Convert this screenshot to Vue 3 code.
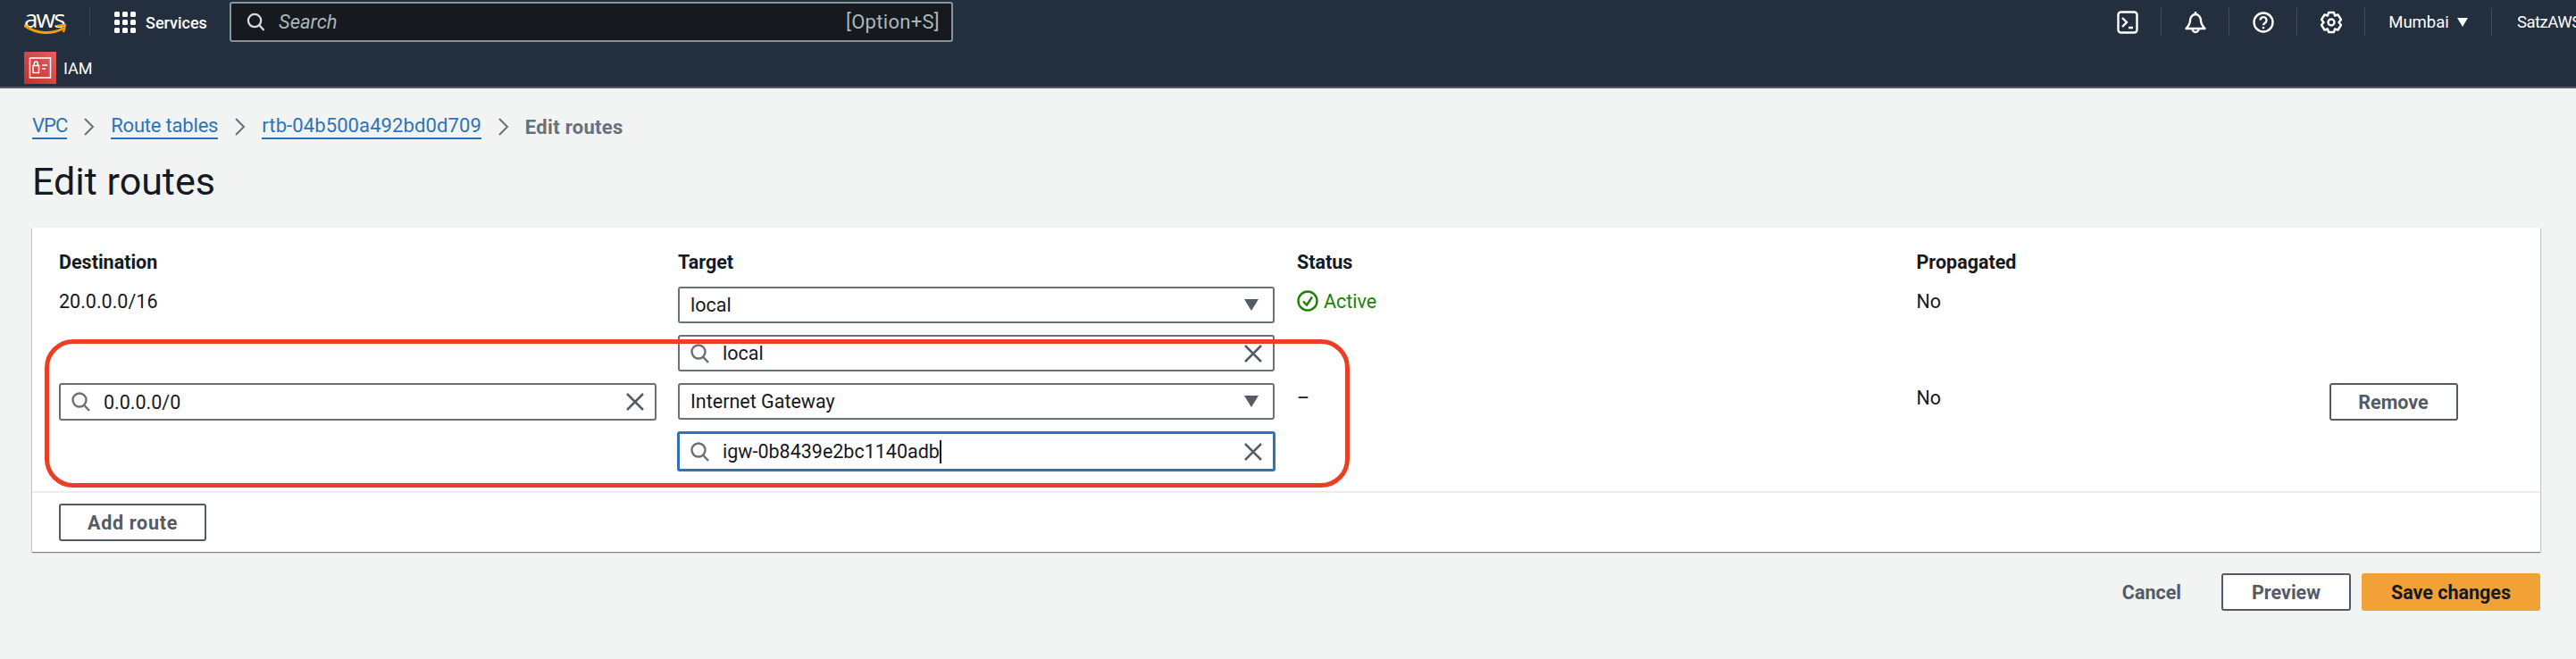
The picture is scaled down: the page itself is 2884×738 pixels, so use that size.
<script setup>
const crumbs = [
  { label: "VPC", cls: "w1" },
  { label: "Route tables", cls: "w2" },
  { label: "rtb-04b500a492bd0d709", cls: "w3" },
];
const columns = ["Destination", "Target", "Status", "Propagated", ""];
const dots = [0, 9, 18];
</script>

<template>
  <div class="page">
    <header class="topbar">
      <div class="nav-main">
        <div class="logo">
          <span class="logo-text">aws</span>
          <svg class="smile" width="48" height="12" viewBox="0 0 48 12">
            <path d="M1 2c13 9 30 10 42 3" fill="none" stroke="#f90" stroke-width="3" stroke-linecap="round" />
            <path d="M37 2l9-1-2 8" fill="none" stroke="#f90" stroke-width="2.5" stroke-linejoin="round" />
          </svg>
        </div>
        <span class="logo-divider"></span>
        <div class="services">
          <svg width="24" height="24" viewBox="0 0 24 24">
            <template v-for="y in dots" :key="y">
              <rect v-for="x in dots" :key="x" :x="x" :y="y" width="6" height="6" rx="1.5" fill="#fff" />
            </template>
          </svg>
          <span>Services</span>
        </div>
        <div class="global-search">
          <svg width="21" height="21" viewBox="0 0 22 22" fill="none" stroke="#d5dbdb" stroke-width="2.4">
            <circle cx="9.5" cy="9.5" r="7.5" />
            <path d="M15 15l5.500 6" />
          </svg>
          <span class="search-hint">Search</span>
          <span class="search-key">[Option+S]</span>
        </div>
        <div class="nav-right">
          <div class="nav-cell">
            <svg width="24" height="26" viewBox="0 0 24 26" fill="none" stroke="#fff" stroke-width="2.4">
              <rect x="1.500" y="1.500" width="21" height="23" rx="3" />
              <path d="M6 8l5 5-5 5M13 19h5" />
            </svg>
          </div>
          <div class="nav-cell">
            <svg width="24" height="26" viewBox="0 0 24 26" fill="none" stroke="#fff" stroke-width="2.400" stroke-linejoin="round">
              <path d="M12 1v3M6 11c0-4 3-7 6-7s6 3 6 7c0 4 2 6 4.500 9h-21C4 17 6 15 6 11z" />
              <path d="M8.500 20.500a3.500 3.500 0 0 0 7 0" />
            </svg>
          </div>
          <div class="nav-cell">
            <svg width="24" height="24" viewBox="0 0 24 24" fill="none" stroke="#fff" stroke-width="2.400">
              <circle cx="12" cy="12" r="10.500" />
              <path d="M8.500 9.500a3.500 3.500 0 1 1 5.500 3c-1.300.8-2 1.300-2 2.800" />
              <path d="M12 17v2.200" />
            </svg>
          </div>
          <div class="nav-cell">
            <svg width="24" height="26" viewBox="0 0 24 26" fill="none" stroke="#fff" stroke-width="2.400" stroke-linejoin="round">
              <path d="M9 2h6l1 3.500 3.500-1L23 10l-2.500 3 2.500 3-3.500 5.500-3.500-1L15 24H9l-1-3.500-3.500 1L1 16l2.500-3L1 10l3.500-5.500 3.500 1z" />
              <circle cx="12" cy="13" r="3.500" />
            </svg>
          </div>
          <div class="nav-cell region">
            <span>Mumbai</span>
            <i class="region-caret"></i>
          </div>
          <div class="nav-cell account">SatzAWS</div>
        </div>
      </div>
      <div class="nav-sub">
        <svg width="36" height="36" viewBox="0 0 36 36">
          <defs>
            <linearGradient id="iamRed" x1="0" y1="1" x2="1" y2="0">
              <stop offset="0" stop-color="#bd3230" />
              <stop offset="1" stop-color="#e4605c" />
            </linearGradient>
          </defs>
          <rect width="36" height="36" fill="url(#iamRed)" />
          <rect x="6.500" y="7" width="23" height="22" fill="none" stroke="#fff" stroke-width="1.500" />
          <rect x="10" y="15.500" width="6.500" height="8" fill="none" stroke="#fff" stroke-width="1.500" />
          <path d="M11.300 15.500v-2.500a2 2 0 0 1 4 0v2.500M20 15h6M20 19h4" fill="none" stroke="#fff" stroke-width="1.500" />
        </svg>
        <span>IAM</span>
      </div>
    </header>

    <main class="content">
      <nav class="breadcrumbs">
        <template v-for="crumb in crumbs" :key="crumb.label">
          <a :class="crumb.cls">{{ crumb.label }}</a>
          <svg class="chevron" width="13" height="20" viewBox="0 0 13 20" fill="none" stroke="#687078" stroke-width="2">
            <path d="M2 1l9 9-9 9" />
          </svg>
        </template>
        <span class="crumb-current">Edit routes</span>
      </nav>
      <h1>Edit routes</h1>

      <section class="card">
        <div class="routes">
          <div class="route-row head-row">
            <div v-for="col in columns" :key="col" class="col-head">{{ col }}</div>
          </div>

          <div class="route-row">
            <div class="cell-text dest-text">20.0.0.0/16</div>
            <div class="target-stack">
              <div class="field select">
                <span>local</span>
                <i class="caret"></i>
              </div>
              <div class="field search">
                <svg class="mag" width="22" height="22" viewBox="0 0 22 22" fill="none" stroke="#687078" stroke-width="2.400">
                  <circle cx="9" cy="9" r="7.500" />
                  <path d="M14 14.500l6 6.500" />
                </svg>
                <span>local</span>
                <svg class="clear" width="20" height="20" viewBox="0 0 20 20" fill="none" stroke="#545b64" stroke-width="2.500">
                  <path d="M1 1l18 18M19 1L1 19" />
                </svg>
              </div>
            </div>
            <div class="cell-text status-active">
              <svg width="24" height="24" viewBox="0 0 24 24" fill="none" stroke="#1d8102" stroke-width="2.400">
                <circle cx="12" cy="12" r="10.500" />
                <path d="M7 12.500l4 4 6-9" />
              </svg>
              <span>Active</span>
            </div>
            <div class="cell-text">No</div>
            <div></div>
          </div>

          <div class="route-row">
            <div class="field search dest-input">
              <svg class="mag" width="22" height="22" viewBox="0 0 22 22" fill="none" stroke="#687078" stroke-width="2.400">
                <circle cx="9" cy="9" r="7.500" />
                <path d="M14 14.500l6 6.500" />
              </svg>
              <span>0.0.0.0/0</span>
              <svg class="clear" width="20" height="20" viewBox="0 0 20 20" fill="none" stroke="#545b64" stroke-width="2.500">
                <path d="M1 1l18 18M19 1L1 19" />
              </svg>
            </div>
            <div class="target-stack">
              <div class="field select">
                <span>Internet Gateway</span>
                <i class="caret"></i>
              </div>
              <div class="field search focused">
                <svg class="mag" width="22" height="22" viewBox="0 0 22 22" fill="none" stroke="#687078" stroke-width="2.400">
                  <circle cx="9" cy="9" r="7.500" />
                  <path d="M14 14.500l6 6.500" />
                </svg>
                <span>igw-0b8439e2bc1140adb</span><i class="text-caret"></i>
                <svg class="clear" width="20" height="20" viewBox="0 0 20 20" fill="none" stroke="#545b64" stroke-width="2.500">
                  <path d="M1 1l18 18M19 1L1 19" />
                </svg>
              </div>
            </div>
            <div class="cell-text">–</div>
            <div class="cell-text">No</div>
            <button class="btn">Remove</button>
          </div>
        </div>

        <div class="card-footer">
          <button class="btn add-route">Add route</button>
        </div>

        <div class="annotation"></div>
      </section>

      <div class="actions">
        <span class="cancel">Cancel</span>
        <button class="btn preview">Preview</button>
        <button class="btn primary">Save changes</button>
      </div>
    </main>
  </div>
</template>

<style>
html,
body {
  margin: 0;
  background: #f2f3f3;
  overflow: hidden;
}
</style>

<style scoped>
.page {
  width: 2884px;
  height: 738px;
  background: #f2f3f3;
  font-family: Roboto, "Liberation Sans", sans-serif;
  font-size: 21.500px;
  color: #16191f;
  overflow: hidden;
}
.topbar {
  height: 97px;
  background: #232f3e;
  border-bottom: 2px solid #545b64;
  color: #fff;
}
.nav-main {
  display: flex;
  height: 52px;
  padding-left: 27px;
  align-items: center;
}
.logo {
  position: relative;
  width: 47px;
  height: 30px;
  margin-top: -4px;
}
.logo-text {
  display: block;
  font-family: "Open Sans", sans-serif;
  font-size: 28px;
  line-height: 22px;
  letter-spacing: -2px;
}
.smile {
  position: absolute;
  left: 0;
  top: 18px;
}
.logo-divider {
  width: 1px;
  height: 32px;
  margin: -4px 27px 0 26px;
  background: #3b4656;
}
.services {
  display: flex;
  align-items: center;
  gap: 11px;
  width: 129px;
  font-size: 18px;
  font-weight: 500;
  margin-top: -2px;
}
.global-search {
  display: flex;
  align-items: center;
  box-sizing: border-box;
  width: 810px;
  height: 45px;
  margin-top: -3px;
  padding: 0 13px 0 17px;
  background: #16191f;
  border: 2px solid #879596;
  border-radius: 3px;
  font-size: 22px;
  color: #aab7b8;
}
.search-hint {
  margin-left: 15px;
  font-style: italic;
  flex: 1;
}
.search-key {
  letter-spacing: 0.300px;
}
.nav-right {
  display: flex;
  width: 540px;
  margin-left: auto;
  margin-top: -3px;
  overflow: hidden;
}
.nav-cell {
  display: flex;
  flex: none;
  align-items: center;
  justify-content: center;
  box-sizing: border-box;
  width: 76px;
  height: 32px;
  border-right: 1px solid #414d5c;
  font-size: 18.500px;
}
.region {
  width: 142px;
  gap: 9px;
}
.account {
  width: 100px;
  justify-content: flex-start;
  padding-left: 28px;
  border: 0;
  white-space: nowrap;
  letter-spacing: -0.500px;
}
.region-caret {
  width: 0;
  height: 0;
  border-left: 6px solid transparent;
  border-right: 6px solid transparent;
  border-top: 10px solid #fff;
}
.nav-sub {
  display: flex;
  align-items: center;
  gap: 8px;
  padding: 6px 0 0 27px;
  font-size: 18px;
}
.content {
  padding: 29px 40px 0 36px;
}
.breadcrumbs {
  display: flex;
  align-items: center;
  height: 28px;
  gap: 18px;
}
.breadcrumbs a {
  color: #2e73b8;
  line-height: 26px;
  border-bottom: 2px solid #2e73b8;
  font-size: 22px;
}
.breadcrumbs .w1 {
  letter-spacing: -1px;
}
.breadcrumbs .w2 {
  letter-spacing: -0.200px;
}
.breadcrumbs .w3 {
  letter-spacing: 0.100px;
}
.crumb-current {
  color: #687078;
  font-weight: 700;
  font-size: 22px;
  letter-spacing: 0.300px;
}
h1 {
  margin: 19px 0 0;
  font-size: 43px;
  font-weight: 400;
  line-height: 56px;
  height: 56px;
}
.card {
  position: relative;
  margin-top: 24px;
  background: #fff;
  box-shadow: 0 1px 1px 0 rgba(0, 28, 36, 0.3), 1px 1px 1px 0 rgba(0, 28, 36, 0.15), -1px 1px 1px 0 rgba(0, 28, 36, 0.15);
}
.routes {
  padding: 26px 0 22px 30px;
}
.route-row {
  display: grid;
  grid-template-columns: 693px 693px 693.500px 462px 144px;
  margin-bottom: 13px;
}
.route-row:last-child {
  margin-bottom: 0;
}
.head-row {
  margin-bottom: 14px;
}
.col-head {
  font-weight: 700;
  font-size: 21.500px;
  line-height: 26px;
}
.cell-text {
  padding-top: 4px;
  line-height: 26px;
}
.status-active {
  display: flex;
  align-items: flex-start;
  gap: 6px;
  color: #1d8102;
}
.target-stack {
  display: flex;
  flex-direction: column;
  gap: 13px;
  width: 668px;
}
.field {
  display: flex;
  align-items: center;
  box-sizing: border-box;
  height: 41px;
  padding: 0 12px;
  border: 2px solid #687078;
  border-radius: 3px;
  background: #fff;
}
.dest-input {
  width: 669px;
  height: 42px;
}
.select {
  justify-content: space-between;
}
.caret {
  width: 0;
  height: 0;
  margin-right: 4px;
  border-left: 8px solid transparent;
  border-right: 8px solid transparent;
  border-top: 13px solid #545b64;
}
.mag {
  flex: none;
  margin-right: 14px;
}
.clear {
  flex: none;
  margin-left: auto;
}
.focused {
  height: 45px;
  margin: 0 -1px;
  padding: 0 12px;
  border: 3px solid #2e73b8;
}
.text-caret {
  width: 2px;
  height: 26px;
  background: #16191f;
}
.btn {
  box-sizing: border-box;
  height: 42px;
  padding: 0;
  border: 2px solid #545b64;
  border-radius: 3px;
  background: #fff;
  color: #545b64;
  font-family: inherit;
  font-size: 21.500px;
  font-weight: 700;
}
.card-footer {
  padding: 12px 30px;
  border-top: 2px solid #eaeded;
}
.add-route {
  width: 165px;
  letter-spacing: 0.700px;
}
.annotation {
  position: absolute;
  left: 14px;
  top: 125px;
  box-sizing: border-box;
  width: 1461px;
  height: 166px;
  border: 5px solid #ea3f24;
  border-radius: 32px;
  pointer-events: none;
}
.actions {
  display: flex;
  align-items: center;
  justify-content: flex-end;
  margin-top: 24px;
}
.cancel {
  margin-right: 45px;
  color: #545b64;
  font-weight: 700;
}
.preview {
  width: 145px;
  margin-right: 12px;
}
.primary {
  width: 200px;
  border: 0;
  background: #f2a137;
  color: #16191f;
}
</style>
